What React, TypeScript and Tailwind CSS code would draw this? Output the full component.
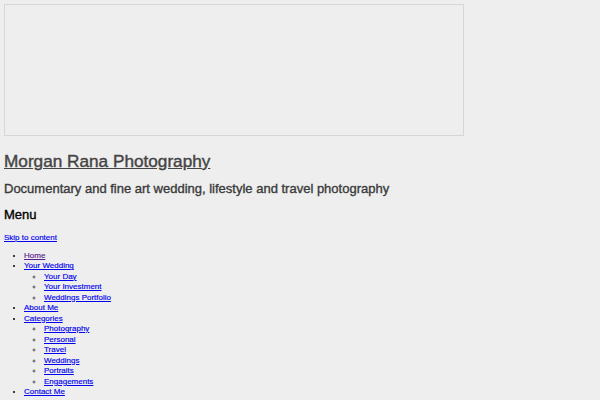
const nav = [
  { label: 'Home', visited: true },
  { label: 'Your Wedding', children: ['Your Day', 'Your Investment', 'Weddings Portfolio'] },
  { label: 'About Me' },
  { label: 'Categories', children: ['Photography', 'Personal', 'Travel', 'Weddings', 'Portraits', 'Engagements'] },
  { label: 'Contact Me' },
]

export default function App() {
  return (
    <div className="min-h-[400px] bg-[#eeeeee] px-1 pt-1 font-['Liberation_Sans',Arial,sans-serif] text-black">
      <div className="h-[132px] w-[460px] border border-[#d6d6d6]" />

      <h1 className="mt-[15px] text-[17.2px] leading-[20px] [-webkit-text-stroke:0.4px_#444444]">
        <a href="#" className="text-[#444444] underline">
          Morgan Rana Photography
        </a>
      </h1>
      <h2 className="mt-[10px] text-[13px] leading-[16px] text-[#3a3a3a] [-webkit-text-stroke:0.35px_#3a3a3a]">
        Documentary and fine art wedding, lifestyle and travel photography
      </h2>

      <h3 className="mt-[10px] text-[13px] leading-[16px] [-webkit-text-stroke:0.35px_#000]">Menu</h3>
      <a href="#" className="mt-[10px] block text-[8px] leading-[10.5px] text-[#0000ee] underline [-webkit-text-stroke:0.15px_#0000ee]">
        Skip to content
      </a>

      <ul className="mt-[7px] list-disc pl-[20px] text-[8px] leading-[10.5px]">
        {nav.map((item) => (
          <li key={item.label}>
            <a
              href="#"
              className={
                item.visited
                  ? 'text-[#551a8b] underline [-webkit-text-stroke:0.15px_#551a8b]'
                  : 'text-[#0000ee] underline [-webkit-text-stroke:0.15px_#0000ee]'
              }
            >
              {item.label}
            </a>
            {item.children ? (
              <ul className="list-[circle] pl-[20px] marker:text-[#555555]">
                {item.children.map((child) => (
                  <li key={child}>
                    <a href="#" className="text-[#0000ee] underline [-webkit-text-stroke:0.15px_#0000ee]">
                      {child}
                    </a>
                  </li>
                ))}
              </ul>
            ) : null}
          </li>
        ))}
      </ul>
    </div>
  )
}
